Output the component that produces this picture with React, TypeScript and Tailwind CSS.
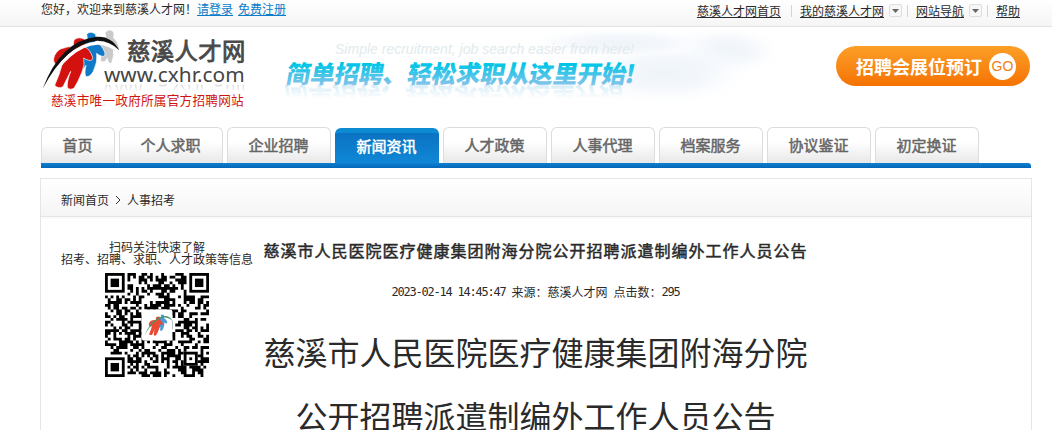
import { clsx } from 'clsx';

const NAV_ITEMS = ['首页', '个人求职', '企业招聘', '新闻资讯', '人才政策', '人事代理', '档案服务', '协议鉴证', '初定换证'];
const ACTIVE_ITEM = '新闻资讯';

const QR_SIZE = 37;

function isFinder(x: number, y: number) {
  return (x < 8 && y < 8) || (x > QR_SIZE - 9 && y < 8) || (x < 8 && y > QR_SIZE - 9);
}

function buildModules() {
  let seed = 20230214;
  let d = '';
  for (let y = 0; y < QR_SIZE; y++) {
    for (let x = 0; x < QR_SIZE; x++) {
      seed = (seed * 1103515245 + 12345) % 2147483648;
      const dark = seed / 2147483648 > 0.47;
      const inAlign = x > 27 && x < 33 && y > 27 && y < 33;
      if (dark && !isFinder(x, y) && !inAlign) d += `M${x} ${y}h1v1h-1z`;
    }
  }
  return d;
}

const QR_MODULES = buildModules();

function Finder({ x, y }: { x: number; y: number }) {
  return (
    <g>
      <rect x={x + 0.5} y={y + 0.5} width="6" height="6" fill="none" stroke="#000" strokeWidth="1" />
      <rect x={x + 2} y={y + 2} width="3" height="3" />
    </g>
  );
}

const GREY_FIGURE =
  'M196 14Q204 2 217 9Q224 17 219 29Q232 38 237 62Q237 72 226 70Q222 68 219 64Q222 84 214 104Q206 110 202 88Q196 106 182 98Q184 80 188 66L176 40Q186 25 199 28Z';
const BLUE_FIGURE =
  'M140 18Q152 8 166 18Q172 30 166 41Q184 48 194 72Q198 86 186 85Q176 82 170 76Q174 100 160 130Q150 148 138 146Q132 138 138 112Q130 126 120 122Q112 116 116 96L120 48Q130 34 143 38Z';
const RED_FIGURE =
  'M102 36Q116 24 134 34Q142 44 135 57Q150 64 158 88Q158 100 146 97Q138 95 131 90Q136 108 126 132Q115 160 102 181Q90 188 82 179Q80 162 92 130Q84 146 69 176Q55 184 44 172Q58 142 68 104Q58 116 48 110Q36 100 44 82Q54 62 72 60Q84 54 102 58Q98 46 102 36Z';
const SWOOSH = 'M8 182Q62 38 170 26Q216 24 238 67Q210 38 172 38Q80 46 8 182Z';

function Logo() {
  return (
    <svg className="h-[84px] w-[210px]" viewBox="0 0 630 252">
      <defs>
        <linearGradient id="fade" x1="0" y1="170" x2="0" y2="192" gradientUnits="userSpaceOnUse">
          <stop offset="0" stopColor="#444" stopOpacity="0.2" />
          <stop offset="1" stopColor="#444" stopOpacity="0" />
        </linearGradient>
      </defs>
      <path fill="#c9cacc" d={GREY_FIGURE} />
      <path fill="#0f7ac8" stroke="#fff" strokeWidth="2" d={BLUE_FIGURE} />
      <path fill="#d3120f" stroke="#fff" strokeWidth="2" d={RED_FIGURE} />
      <path fill="#fff" d="M10 184Q72 50 172 40Q212 40 238 68L234 76Q206 50 172 50Q92 54 14 184Z" />
      <path fill="#111" d={SWOOSH} />
      <text x="261" y="96" fontSize="70" fill="#484848" stroke="#484848" strokeWidth="2.4" textLength="355" className="font-['Noto_Sans_CJK_SC',sans-serif]">
        慈溪人才网
      </text>
      <text x="192" y="163" fontSize="58" fill="#444" textLength="422" lengthAdjust="spacingAndGlyphs" className="font-['Noto_Sans',sans-serif]">
        www.cxhr.com
      </text>
      <path
        d="M200 170l-5 20M208 170l6 20M228 170l6 20M246 170l-5 20M256 170l6 20M274 170l-5 20M286 170l5 20M304 170l-5 20M358 170q6 8 22 0M400 190l12-20M424 170l12 20M448 170v20M472 170v20M486 170v20M526 170q6 8 20 0M562 170v14M580 170v20M594 170v20M610 170v20"
        fill="none"
        stroke="url(#fade)"
        strokeWidth="5"
      />
      <text x="33" y="231" fontSize="38" fill="#d1140f" textLength="578" className="font-['Noto_Sans_CJK_SC',sans-serif]">
        慈溪市唯一政府所属官方招聘网站
      </text>
    </svg>
  );
}

function Slogan() {
  return (
    <svg className="h-[92px] w-[510px]" viewBox="0 0 510 92">
      <defs>
        <linearGradient id="ink" x1="0" y1="-21" x2="0" y2="2" gradientUnits="userSpaceOnUse">
          <stop offset="0.1" stopColor="#00c5e6" />
          <stop offset="1" stopColor="#83c4ea" />
        </linearGradient>
        <linearGradient id="mirror" x1="0" y1="-12" x2="0" y2="2" gradientUnits="userSpaceOnUse">
          <stop offset="0" stopColor="#7cc3e8" stopOpacity="0" />
          <stop offset="1" stopColor="#7cc3e8" stopOpacity="0.3" />
        </linearGradient>
        <radialGradient id="cloud">
          <stop offset="0" stopColor="#eef4f9" />
          <stop offset="0.5" stopColor="#f2f6fb" stopOpacity="0.8" />
          <stop offset="1" stopColor="#fff" stopOpacity="0" />
        </radialGradient>
      </defs>
      <ellipse cx="445" cy="24" rx="60" ry="26" fill="url(#cloud)" />
      <ellipse cx="385" cy="46" rx="90" ry="34" fill="url(#cloud)" />
      <ellipse cx="340" cy="16" rx="100" ry="16" fill="url(#cloud)" />
      <text x="55" y="27" fontSize="14" fontStyle="italic" fill="#e1ebed" textLength="299" className="font-['Liberation_Sans',sans-serif]">
        Simple recruitment, job search easier from here!
      </text>
      <g className="font-['Noto_Sans_CJK_SC',sans-serif]" fontSize="24.5" fontWeight="900">
        <g transform="translate(5 55.5) skewX(-10)" fill="url(#ink)">
          <text textLength="340">简单招聘、轻松求职从这里开始</text>
          <text x="339">!</text>
        </g>
        <g transform="translate(3 60) scale(1 -1) skewX(-10)" fill="url(#mirror)" aria-hidden="true">
          <text textLength="340">简单招聘、轻松求职从这里开始</text>
        </g>
      </g>
    </svg>
  );
}

function Divider() {
  return <span className="h-3 w-px bg-[#d4d4d4]" />;
}

function DropArrow() {
  return (
    <span className="ml-[5px] flex size-[13px] items-center justify-center rounded-[2px] border border-[#dedede] bg-[#f7f7f7]">
      <svg className="h-1 w-[7px]" viewBox="0 0 7 4">
        <path d="M0 0h7L3.5 4z" fill="#666" />
      </svg>
    </span>
  );
}

function TopBar() {
  return (
    <div className="flex h-[27px] justify-between border-b border-[#e3e3e3] bg-linear-to-b from-white to-[#f5f5f5] pr-8 pl-[41px] leading-[18px]">
      <div className="flex">
        <span>您好，欢迎来到慈溪人才网！</span>
        <a href="#login" className="text-[#0a7cc9] underline">请登录</a>
        <a href="#register" className="ml-[5px] text-[#0a7cc9] underline">免费注册</a>
      </div>
      <div className="flex h-[21px] items-center">
        <a href="#home" className="mr-[10px] underline">慈溪人才网首页</a>
        <Divider />
        <a href="#mine" className="ml-2 underline">我的慈溪人才网</a>
        <DropArrow />
        <span className="w-[5px]" />
        <Divider />
        <a href="#sitemap" className="ml-2 underline">网站导航</a>
        <DropArrow />
        <span className="w-[5px]" />
        <Divider />
        <a href="#help" className="ml-2 underline">帮助</a>
      </div>
    </div>
  );
}

function Header() {
  return (
    <header className="flex h-[100px] pl-10">
      <div className="pt-px">
        <Logo />
      </div>
      <div className="ml-[30px]">
        <Slogan />
      </div>
      <button className="mt-[19px] ml-[46px] flex h-10 w-[194px] items-center rounded-full bg-linear-to-b from-[#fc9f26] to-[#f57200] pl-[20px] text-[18px] font-bold whitespace-nowrap text-white">
        招聘会展位预订
        <span className="ml-[7px] flex size-[27px] items-center justify-center rounded-full bg-white font-['Liberation_Sans',sans-serif] text-[14px] font-normal text-[#f08012]">
          GO
        </span>
      </button>
    </header>
  );
}

function Navigation() {
  return (
    <nav className="mx-[41px] w-[990px]">
      <ul className="flex h-9 items-end gap-1">
        {NAV_ITEMS.map((item, index) => (
          <li
            key={item}
            className={clsx(
              'flex items-center justify-center pr-px text-[15px] [-webkit-text-stroke:0.5px]',
              index === 0 ? 'w-[74px]' : 'w-[104px]',
              item === ACTIVE_ITEM
                ? 'h-[35px] rounded-t-[6px] border-t-[5px] border-[#0e8ad3] bg-linear-to-b from-[#0b72c2] to-[#0f88d6] pb-1 text-white'
                : 'h-9 rounded-t-[6px] border border-b-0 border-[#dcdcdc] bg-linear-to-b from-white from-40% to-[#e8e8e8] text-[#666]',
            )}
          >
            {item}
          </li>
        ))}
      </ul>
      <div className="h-[5px] rounded-tr-[3px] bg-linear-to-b from-[#0f7fd0] to-[#0467b8]" />
    </nav>
  );
}

function QrCode() {
  return (
    <svg className="mt-2 ml-[44px] size-[104px]" viewBox="0 0 37 37">
      <path d={QR_MODULES} />
      <Finder x={0} y={0} />
      <Finder x={30} y={0} />
      <Finder x={0} y={30} />
      <rect x="28.5" y="28.5" width="4" height="4" fill="none" stroke="#000" />
      <rect x="30" y="30" width="1" height="1" />
      <rect x="13" y="13" width="11" height="11" rx="1" fill="#fff" />
      <g transform="translate(13.8 14.2) scale(0.043 0.044)">
        <path fill="#4a9ad6" d={BLUE_FIGURE} />
        <path fill="#ea4a33" d={RED_FIGURE} />
        <path fill="#3d9a70" d={SWOOSH} />
      </g>
    </svg>
  );
}

function Article() {
  return (
    <main className="mx-10 mt-[10px] h-[252px] w-[992px] border border-b-0 border-[#e5e5e5]">
      <div className="flex h-[38px] items-center border-b border-[#e5e5e5] bg-linear-to-b from-white to-[#f5f5f5] pt-[5px] pl-5">
        <span>新闻首页</span>
        <svg className="mx-[7px] h-2 w-1" viewBox="0 0 4 8">
          <path d="M0 0l4 4-4 4" fill="none" stroke="#333" />
        </svg>
        <span>人事招考</span>
      </div>
      <div className="grid grid-cols-[223px_543px_1fr] border-t-2 border-[#fafafa]">
        <aside className="pt-[22px] pl-5">
          <div className="w-48 text-center leading-3 whitespace-nowrap">
            扫码关注快速了解
            <br />
            招考、招聘、求职、人才政策等信息
          </div>
          <QrCode />
        </aside>
        <article className="flex flex-col items-center whitespace-nowrap">
          <h1 className="mt-[19px] text-[16px] leading-6 tracking-[1px] [-webkit-text-stroke:0.5px]">
            慈溪市人民医院医疗健康集团附海分院公开招聘派遣制编外工作人员公告
          </h1>
          <div className="mt-[20px] flex h-5 items-center gap-[6px]">
            <span className="font-['DejaVu_Sans_Mono',monospace] tracking-[-1.22px]">2023-02-14</span>
            <span className="font-['DejaVu_Sans_Mono',monospace] tracking-[-1.22px]">14:45:47</span>
            <span>来源：慈溪人才网</span>
            <span className="flex items-center">
              点击数：<span className="font-['DejaVu_Sans_Mono',monospace] tracking-[-1.22px]">295</span>
            </span>
          </div>
          <div className="mt-[17px] h-[111px] overflow-hidden text-center text-[32px] leading-[64px]">
            慈溪市人民医院医疗健康集团附海分院
            <br />
            公开招聘派遣制编外工作人员公告
          </div>
        </article>
      </div>
    </main>
  );
}

export default function App() {
  return (
    <div className="h-[430px] w-[1052px] overflow-hidden bg-white font-['Noto_Sans_CJK_SC',sans-serif] text-[12px] text-[#2a2a2a]">
      <TopBar />
      <Header />
      <Navigation />
      <Article />
    </div>
  );
}
